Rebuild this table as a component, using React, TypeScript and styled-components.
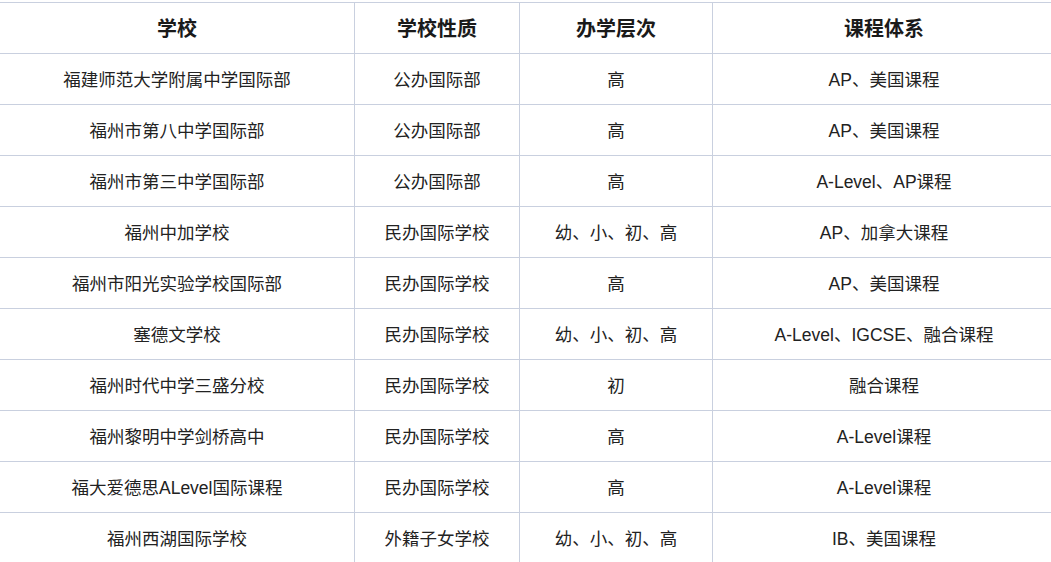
import React from 'react';
import styled, { createGlobalStyle } from 'styled-components';

const GlobalStyle = createGlobalStyle`
  html, body {
    margin: 0;
    padding: 0;
    background: #ffffff;
    overflow: hidden;
  }
  body {
    font-family: "Liberation Sans", "Noto Sans CJK SC", sans-serif;
    color: #222222;
  }
`;

const columns: { title: string; width: number }[] = [
  { title: '学校', width: 355 },
  { title: '学校性质', width: 165 },
  { title: '办学层次', width: 193 },
  { title: '课程体系', width: 343 },
];

const rows: [string, string, string, string][] = [
  ['福建师范大学附属中学国际部', '公办国际部', '高', 'AP、美国课程'],
  ['福州市第八中学国际部', '公办国际部', '高', 'AP、美国课程'],
  ['福州市第三中学国际部', '公办国际部', '高', 'A-Level、AP课程'],
  ['福州中加学校', '民办国际学校', '幼、小、初、高', 'AP、加拿大课程'],
  ['福州市阳光实验学校国际部', '民办国际学校', '高', 'AP、美国课程'],
  ['塞德文学校', '民办国际学校', '幼、小、初、高', 'A-Level、IGCSE、融合课程'],
  ['福州时代中学三盛分校', '民办国际学校', '初', '融合课程'],
  ['福州黎明中学剑桥高中', '民办国际学校', '高', 'A-Level课程'],
  ['福大爱德思ALevel国际课程', '民办国际学校', '高', 'A-Level课程'],
  ['福州西湖国际学校', '外籍子女学校', '幼、小、初、高', 'IB、美国课程'],
];

const Page = styled.div`
  padding-top: 2px;
  margin-left: -1px;
`;

const Table = styled.table`
  border-collapse: collapse;
  table-layout: fixed;
  width: 1056px;
`;

const Col = styled.col<{ $width: number }>`
  width: ${(p) => p.$width}px;
`;

const HeadCell = styled.th`
  height: 48px;
  padding: 0 0 2px;
  border: 1px solid #c9d0df;
  font-size: 20px;
  font-weight: 700;
  text-align: center;
  color: #1a1a1a;
`;

const Cell = styled.td`
  height: 48px;
  padding: 0 0 2px;
  border: 1px solid #c9d0df;
  font-size: 17.5px;
  text-align: center;
  color: #222222;
  white-space: nowrap;
`;

const App = () => {
  return (
    <Page>
      <GlobalStyle />
      <Table>
        <colgroup>
          {columns.map((c) => (
            <Col key={c.title} $width={c.width} />
          ))}
        </colgroup>
        <thead>
          <tr>
            {columns.map((c) => (
              <HeadCell key={c.title}>{c.title}</HeadCell>
            ))}
          </tr>
        </thead>
        <tbody>
          {rows.map((r, i) => (
            <tr key={i}>
              {r.map((c, j) => (
                <Cell key={j}>{c}</Cell>
              ))}
            </tr>
          ))}
        </tbody>
      </Table>
    </Page>
  );
};

export default App;
